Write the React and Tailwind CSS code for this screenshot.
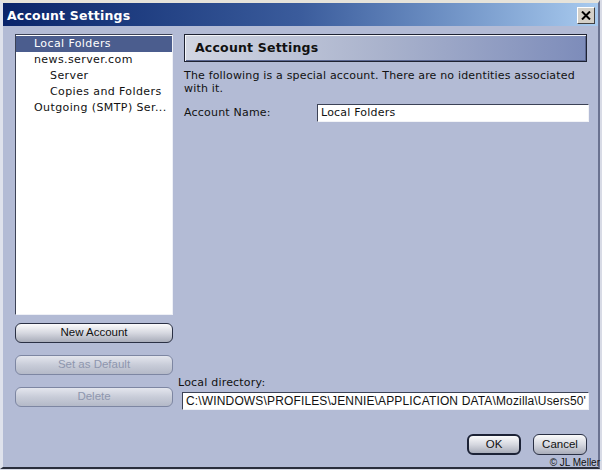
import React from "react";

const listFont = { fontFamily: '"DejaVu Sans", Verdana, sans-serif' };

function Btn({ children, disabled, def, className = "" }) {
  return (
    <div
      className={
        "flex items-center justify-center rounded-[6px] text-[11.5px] leading-none " +
        (disabled
          ? "border border-[#7d86a2] bg-gradient-to-b from-[#e4e6ee] via-[#c8ccd8] to-[#b4b9c8] text-[#8e96ae] "
          : def
          ? "border-2 border-[#1c2236] bg-gradient-to-b from-[#fbfbfc] via-[#d6d8e0] to-[#a9adba] text-[#111] "
          : "border border-[#2a3044] bg-gradient-to-b from-[#fbfbfc] via-[#d6d8e0] to-[#a9adba] text-[#111] ") +
        className
      }
      style={{ fontFamily: '"Liberation Sans", Arial, sans-serif' }}
    >
      {children}
    </div>
  );
}

export default function App() {
  const items = [
    { t: "Local Folders", i: 0, sel: true },
    { t: "news.server.com", i: 0 },
    { t: "Server", i: 1 },
    { t: "Copies and Folders", i: 1 },
    { t: "Outgoing (SMTP) Ser...", i: 0 },
  ];
  return (
    <div className="w-[602px] h-[470px] overflow-hidden bg-[#d8dbe6]">
      <div className="w-[600px] h-[469px] flex flex-col bg-[#b3bbd5] border-l-[3px] border-t-[3px] border-r-[2px] border-b-[2px] border-l-[#dfe2ec] border-t-[#e6e3da] border-r-[#6a7290] border-b-[#2a2e3c] relative">
        {/* title bar */}
        <div className="h-[23px] flex items-center justify-between bg-gradient-to-r from-[#0a246a] via-[#3b5c9c] to-[#a9cbef] pl-[4px] pr-[3px]">
          <span
            className="text-white font-bold tracking-[0.2px] pt-[3px]"
            style={{ fontFamily: '"DejaVu Sans", sans-serif', fontSize: "12.5px" }}
          >
            Account Settings
          </span>
          <div className="mt-[2px] w-[18px] h-[17px] bg-[#d4d0c8] border border-t-white border-l-white border-r-[#404040] border-b-[#404040] flex items-center justify-center">
            <svg width="10" height="9" viewBox="0 0 10 9">
              <path d="M1 0.5 L9 8.5 M9 0.5 L1 8.5" stroke="#000" strokeWidth="2" />
            </svg>
          </div>
        </div>

        <div className="flex flex-1">
          {/* left column */}
          <div className="ml-[12px] mt-[8px] w-[158px] flex flex-col">
            <div
              className="h-[281px] bg-white border border-t-[#3c4256] border-l-[#3c4256] border-r-[#eef0f6] border-b-[#eef0f6] pt-[1px]"
              style={listFont}
            >
              {items.map((it) => (
                <div
                  key={it.t}
                  className={
                    "h-[16px] flex items-center text-[11px] tracking-[0.4px] whitespace-nowrap " +
                    (it.sel ? "bg-[#4b5d8e] text-white" : "text-[#111]")
                  }
                  style={{ paddingLeft: it.i ? 34 : 18 }}
                >
                  {it.t}
                </div>
              ))}
            </div>
            <Btn className="mt-[8px] h-[20px]">New Account</Btn>
            <Btn disabled className="mt-[12px] h-[20px]">Set as Default</Btn>
            <Btn disabled className="mt-[12px] h-[20px]">Delete</Btn>
          </div>

          {/* right column */}
          <div className="ml-[11px] mt-[8px] w-[405px] flex flex-col" style={listFont}>
            <div className="w-[403px] h-[28px] border border-[#1e2232] bg-gradient-to-r from-[#d2d6e2] via-[#a9b2cc] to-[#7d8cba] flex items-center pl-[10px] pt-[1px] shadow-[inset_1px_1px_0_#f4f5f9,inset_-1px_-1px_0_#5a6690]">
              <span className="font-bold text-[#111] tracking-[0.2px]" style={{ fontSize: "12.5px" }}>
                Account Settings
              </span>
            </div>
            <div className="mt-[8px] text-[11px] leading-[12.5px] tracking-[0.17px] text-[#111] whitespace-nowrap">
              The following is a special account. There are no identities associated
              <br />
              with it.
            </div>
            <div className="mt-[9px] flex items-center">
              <span className="w-[133px] text-[11px] tracking-[0.2px] text-[#111]">Account Name:</span>
              <div
                className="w-[272px] h-[18px] bg-white border border-t-[#3c4256] border-l-[#3c4256] border-r-[#f2f3f7] border-b-[#f2f3f7] flex items-center pl-[3px] text-[11px] tracking-[0.2px] text-[#111]"
              >
                Local Folders
              </div>
            </div>
            <div className="flex-1" />
            <div className="-ml-[6px] text-[11px] tracking-[0.2px] text-[#111] leading-[13px]">Local directory:</div>
            <div
              className="-ml-[2px] mt-[3px] w-[407px] h-[18px] bg-white border border-t-[#3c4256] border-l-[#3c4256] border-r-[#f2f3f7] border-b-[#f2f3f7] flex items-center pl-[3px] overflow-hidden whitespace-nowrap text-[12px] tracking-[0.15px] text-[#111]"
              style={{ fontFamily: '"Liberation Sans", Arial, sans-serif' }}
            >
              C:\WINDOWS\PROFILES\JENNIE\APPLICATION DATA\Mozilla\Users50'
            </div>
            <div className="h-[57px] shrink-0" />
          </div>
        </div>

        {/* bottom buttons overlay */}
        <div className="absolute left-[464px] top-[431px] flex gap-[12px]">
          <Btn def className="w-[54px] h-[21px]">OK</Btn>
          <Btn className="w-[54px] h-[21px]">Cancel</Btn>
        </div>
        <div
          className="absolute right-[-2px] bottom-[-1px] text-[10px] leading-none text-[#111]"
          style={{ fontFamily: '"Liberation Sans", Arial, sans-serif' }}
        >
          © JL Meller
        </div>
      </div>
    </div>
  );
}
